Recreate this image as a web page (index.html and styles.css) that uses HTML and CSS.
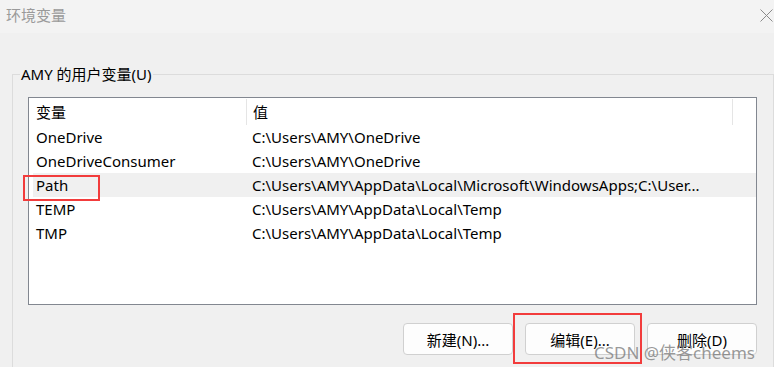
FILE: index.html
```html
<!DOCTYPE html>
<html lang="zh-CN">
<head>
  <meta charset="UTF-8" />
  <title>环境变量</title>
  <link rel="stylesheet" href="styles.css">
</head>
<body>

  <!-- 标题栏 -->
  <header class="titlebar">
    <span class="title">环境变量</span>
    <svg class="close" width="13" height="13" viewBox="0 0 13 13">
      <path d="M0.5 0.5 L12.5 12.5 M12.5 0.5 L0.5 12.5" stroke="#8a8a8a" stroke-width="1" fill="none" />
    </svg>
  </header>

  <!-- 用户变量 -->
  <fieldset class="group">
    <legend>AMY 的用户变量(U)</legend>

    <div class="list">
      <div class="row head">
        <div class="cell">变量</div>
        <div class="cell val">值</div>
      </div>
      <div class="row"><div class="cell">OneDrive</div><div class="cell val">C:\Users\AMY\OneDrive</div></div>
      <div class="row"><div class="cell">OneDriveConsumer</div><div class="cell val">C:\Users\AMY\OneDrive</div></div>
      <div class="row selected"><div class="cell">Path</div><div class="cell val">C:\Users\AMY\AppData\Local\Microsoft\WindowsApps;C:\User...</div></div>
      <div class="row"><div class="cell">TEMP</div><div class="cell val">C:\Users\AMY\AppData\Local\Temp</div></div>
      <div class="row"><div class="cell">TMP</div><div class="cell val">C:\Users\AMY\AppData\Local\Temp</div></div>

      <span class="mark mark-path"></span>
    </div>

    <div class="actions">
      <button class="btn">新建(N)...</button>
      <button class="btn">编辑(E)...</button>
      <button class="btn">删除(D)</button>
      <span class="mark mark-edit"></span>
    </div>
  </fieldset>

  <div class="watermark">CSDN @侠客cheems</div>

</body>
</html>
```

FILE: styles.css
```css
* {
  box-sizing: border-box;
}
body {
  margin: 0;
  width: 774px;
  height: 367px;
  overflow: hidden;
  background: #f0f0f0;
  color: #000;
  font-family: "Noto Sans", "Noto Sans CJK SC", sans-serif;
  font-size: 15px;
  position: relative;
}

/* 标题栏 */
.titlebar {
  height: 33px;
  background: #f3f3f3;
  display: flex;
  align-items: center;
  justify-content: space-between;
  padding: 0 0 4px 6px;
}
.title {
  color: #9a9a9a;
  font-size: 15px;
}
.close {
  margin-right: 1px;
  margin-top: 2px;
}

/* 分组框 */
.group {
  margin: 31px 0 0 12px;
  width: 762px;
  height: 303px;
  padding: 0 16px 0 15px;
  border: 1px solid #dcdcdc;
  border-bottom: none;
}
.group legend {
  margin-left: -8px;
  padding: 0 1px;
  line-height: 20px;
  font-size: 15px;
}

/* 列表 */
.list {
  position: relative;
  margin-top: 13px;
  width: 729px;
  height: 208px;
  background: #fff;
  border: 1px solid #828790;
  padding: 1px 0 0 4px;
}
.row {
  display: grid;
  grid-template-columns: 213px 487px;
  height: 24px;
  align-items: center;
}
.row.head {
  height: 26px;
  align-items: stretch;
}
.row.head .cell {
  display: flex;
  align-items: center;
  padding-bottom: 1px;
}
.row.head .val {
  border-left: 1px solid #e5e5e5;
  border-right: 1px solid #e5e5e5;
}
.row.selected {
  background: #f0f0f0;
}
.cell {
  padding-left: 3px;
  white-space: nowrap;
  overflow: hidden;
}
.cell.val {
  padding-left: 6px;
}

/* 按钮 */
.actions {
  position: relative;
  display: flex;
  justify-content: flex-end;
  gap: 12px;
  width: 729px;
  margin-top: 18px;
}
.btn {
  width: 110px;
  height: 32px;
  background: #fdfdfd;
  border: 1px solid #d0d0d0;
  border-radius: 4px;
  font-family: inherit;
  font-size: 15px;
  color: #000;
}

/* 红色标注框 */
.mark {
  position: absolute;
  border: 2px solid #f23c3c;
}
.mark-path {
  left: -6px;
  top: 77px;
  width: 77px;
  height: 26px;
}
.mark-edit {
  left: 485px;
  top: -10px;
  width: 129px;
  height: 51px;
}

/* 水印 */
.watermark {
  position: absolute;
  left: 594px;
  top: 339px;
  font-size: 17px;
  color: rgba(120, 120, 120, 0.75);
  white-space: nowrap;
}
```
